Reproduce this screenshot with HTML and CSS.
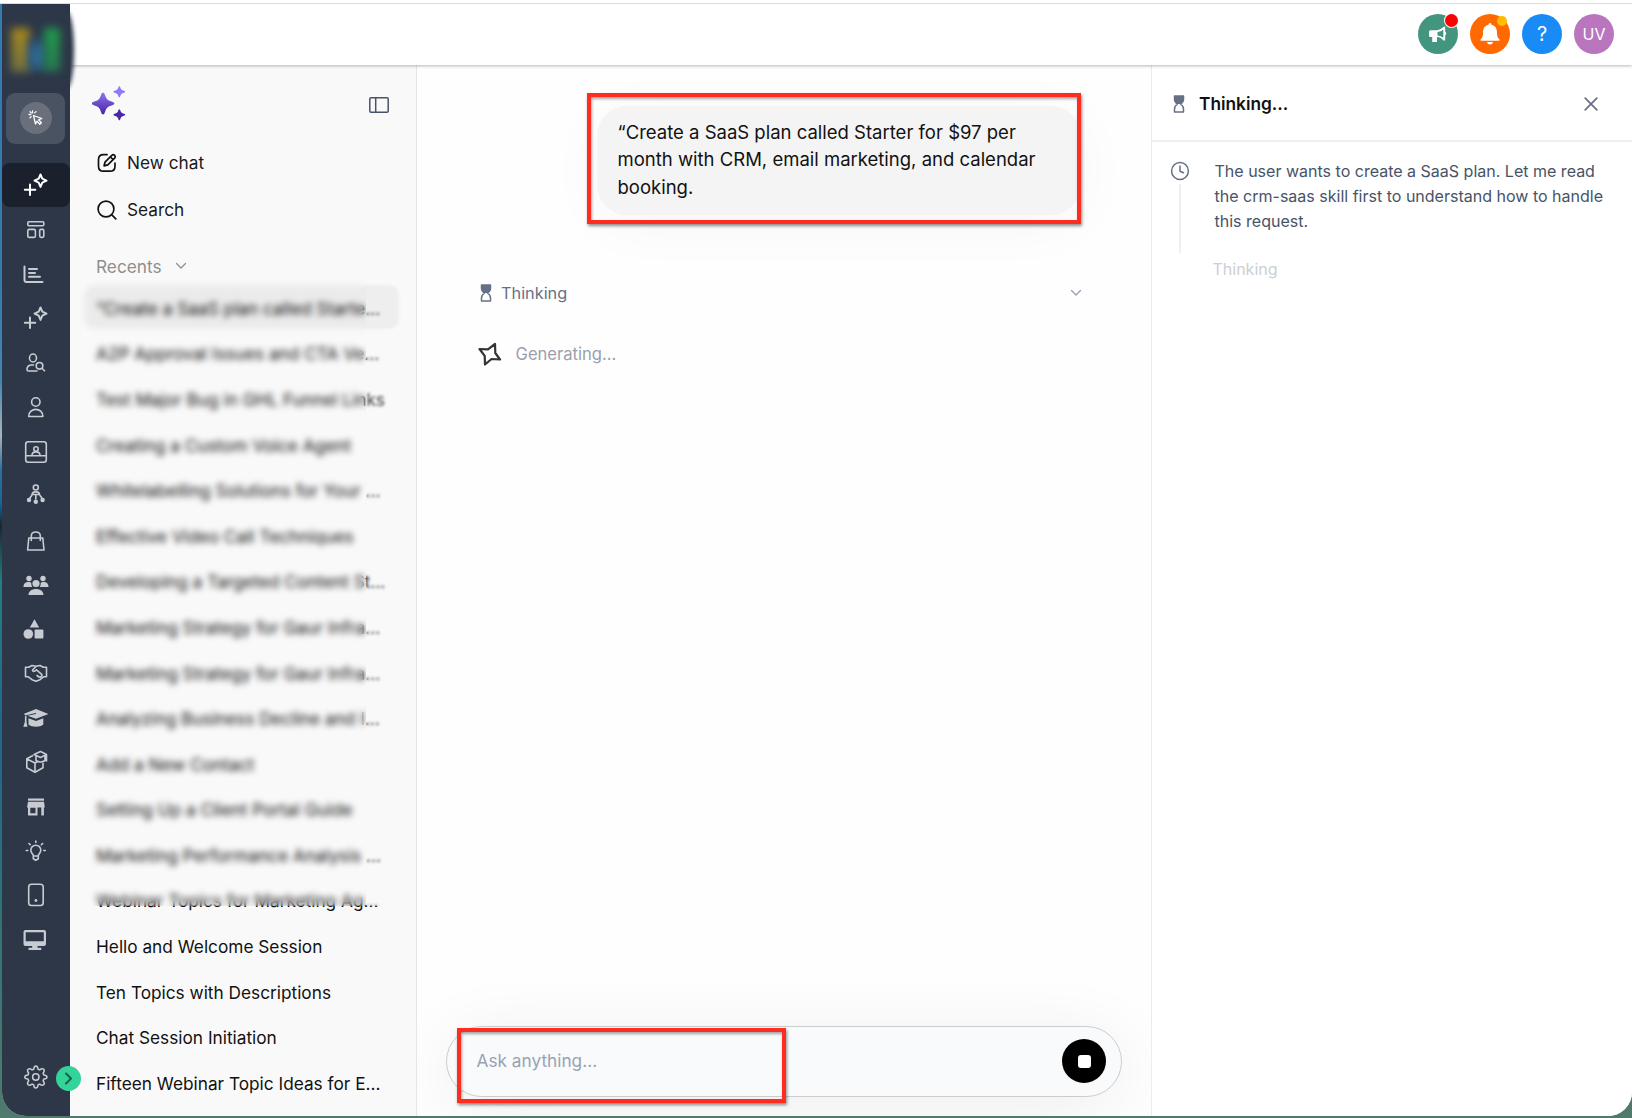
FILE: index.html
```html
<!DOCTYPE html>
<html lang="en">
<head>
<meta charset="utf-8">
<title>Ask AI</title>
<link rel="stylesheet" href="styles.css">
</head>
<body>
<div class="edge"></div>
<div class="window">
  <nav class="rail">
    <div class="logo"><i class="bar bar-y"></i><i class="bar bar-b"></i><i class="bar bar-g"></i></div>
    <div class="quick"><span class="quick-dot"><svg width="18" height="18" viewBox="0 0 18 18"><path d="M6.500 6.500l8.300 3-3.300 1.300 2.900 3-1.600 1.400-2.800-3-1.500 2.800z"/><path d="M5.500 2v1.800M2 5.500h1.800M3 2.600l1.300 1.300M9 2.600L7.700 3.900M3 8.800l1.200-1.200"/></svg></span></div>
    <div class="items">
      <a class="item active"><svg viewBox="0 0 26 26"><path class="w2" d="M17.500 2.500l1.800 4.200 4.200 2-4.200 2-1.800 4.200-1.800-4.200-4.200-2 4.200-2zM7 12.500v10.500M1.800 17.700h10.500"/></svg></a>
      <a class="item"><svg viewBox="0 0 26 26"><rect x="4.800" y="4.800" width="16" height="4" rx="1"/><rect x="4.800" y="12.400" width="7.600" height="8" rx="1.500"/><rect x="16.700" y="12.400" width="4.100" height="8" rx="1.300"/></svg></a>
      <a class="item"><svg viewBox="0 0 26 26"><path class="w2" d="M1.500 5.500v13.500q0 2 2 2h16M6 8h8M6 12h6M6 15.800h11"/></svg></a>
      <a class="item"><svg viewBox="0 0 26 26"><path class="w2" d="M17.500 2.500l1.800 4.200 4.200 2-4.200 2-1.800 4.200-1.800-4.200-4.200-2 4.200-2zM7 12.500v10.500M1.800 17.700h10.500"/></svg></a>
      <a class="item"><svg viewBox="0 0 26 26"><ellipse cx="10" cy="8" rx="3.500" ry="4"/><path d="M10.500 15H8q-4 .5-4 4.500 0 1.500 1.500 1.500H14"/><circle cx="16.500" cy="15.800" r="3.300"/><path d="M19 18.300l2.500 2.500"/></svg></a>
      <a class="item"><svg viewBox="0 0 26 26"><circle cx="12.800" cy="8" r="4.200"/><path d="M5.700 22.500c0-9.500 14.200-9.500 14.200 0z"/></svg></a>
      <a class="item"><svg viewBox="0 0 26 26"><rect x="2.700" y="2.700" width="20.600" height="20.600" rx="2.500"/><path d="M3 16.800h20"/><circle cx="13" cy="10" r="2.200"/><path d="M9 16.500c0-4.800 8-4.800 8 0"/></svg></a>
      <a class="item up"><svg viewBox="0 0 26 26"><circle cx="12.800" cy="6.500" r="2.500"/><path d="M9 13.500c.3-3.500 7.300-3.500 7.600 0zM8.700 14.500l-2.500 3.500M12.800 14v4M17 14.500l2.500 3.500"/><circle class="f" cx="6" cy="19" r="2.200"/><circle class="f" cx="12.800" cy="20.800" r="2.200"/><circle class="f" cx="19.600" cy="19" r="2.200"/></svg></a>
      <a class="item down"><svg viewBox="0 0 26 26"><path d="M5.800 10h14l1.200 12H4.600zM8.300 12.500V8c0-5.300 9-5.300 9 0v4.500"/></svg></a>
      <a class="item"><svg viewBox="0 0 26 26"><g class="f"><circle cx="6" cy="6.500" r="2.700"/><circle cx="20" cy="6.500" r="2.700"/><circle cx="13" cy="11.500" r="3.600"/><path d="M.5 15c0-6 6-5.500 7.800-4.300q-.3 2.600 1 4.300zM25.500 15c0-6-6-5.500-7.800-4.300q.3 2.600-1 4.300zM5.500 23c0-8 15-8 15 0z"/></g></svg></a>
      <a class="item"><svg viewBox="0 0 26 26"><g class="f"><path d="M11.500 3.200l4.700 8.300H6.800z"/><circle cx="5.300" cy="18" r="4.800"/><rect x="11.600" y="13.500" width="8.800" height="9" rx="1"/></g></svg></a>
      <a class="item"><svg viewBox="0 0 26 26"><path d="M2.500 7.200h3.200L9 5.500l4 .8 4-.8 3.300 1.700h3.200v9.500H21l-4 3-4 1.500-4-1.500-4-3H2.500zM13 6.500L9.500 10q.5 3 4-.2l5.200 4.500q1 1.500-1.700 3M14 15.500l2 1.500"/></svg></a>
      <a class="item"><svg viewBox="0 0 26 26"><g class="f"><path d="M13 4l12.500 5L13 13.800 4.500 10.700 13 8.900v-.8L3 10.200 .5 9z"/><path d="M5.500 13.200l7.500 2.700 7.300-2.700v6.300c-3 3-11.500 3-14.800 0z"/><path d="M2 10.500l1.500.5v6l1 4.800H.3l1.500-4.600z"/></g></svg></a>
      <a class="item"><svg viewBox="0 0 26 26"><path d="M9.500 6.700L3.800 9.800v9l8.200 4.500 8-4.500v-4.500M4 10l8 4v9M12 14l2-1"/><path d="M11 5.500l6.500-3 6 3-6 3zM13 7v4.500q4.500 3 9 0V7M23.500 6v6"/></svg></a>
      <a class="item"><svg viewBox="0 0 26 26"><g class="f"><rect x="5" y="4.500" width="16" height="2.200"/><path d="M5 7.800h16l.8 5.800H20.900V21.500H18.300v-7.900h-3.800v7.900H5v-7.900H4zM7.300 13.800v5.400h5.200v-5.400z" fill-rule="evenodd"/></g></svg></a>
      <a class="item"><svg viewBox="0 0 26 26"><path d="M10.300 17.500c-.5-2-2.500-2.700-2.500-5.300a5 5 0 0 1 10 0c0 2.600-2 3.300-2.500 5.300v3.300l-2.500 1.500-2.500-1.500zM10.500 18h4.500M12.800 3v1.500M6 5.500l1.200 1.200M19.600 5.500l-1.200 1.200M3.300 12.500h1.500M20.800 12.500h1.500"/></svg></a>
      <a class="item"><svg viewBox="0 0 26 26"><rect x="5.700" y="2.200" width="14.500" height="21.300" rx="2.800"/><circle class="f" cx="12.900" cy="18.500" r="1.400"/></svg></a>
      <a class="item"><svg viewBox="0 0 26 26"><path class="f" d="M2.500 3h18.500q2 0 2 2v12q0 2-2 2h-6.500v1.700h3.800v2.300H5.500v-2.300h3.700V19H2.500q-2 0-2-2V5q0-2 2-2zM2.700 5.200v9h18.100v-9z" fill-rule="evenodd"/></svg></a>
    </div>
    <a class="gear"><svg width="26" height="26" viewBox="0 0 26 26"><circle cx="12.800" cy="13" r="3.200"/><path d="M12.800 2q2 0 2.300 3.200l1.600.7q2.600-2 4 -.6t-.6 4l.7 1.600Q24 11.200 24 13t-3.200 2.100l-.7 1.600q2 2.600.6 4t-4-.6l-1.600.7Q14.800 24 12.800 24t-2.100-3.200l-1.600-.7q-2.600 2-4 .6t.6-4l-.7-1.600Q1.800 15 1.800 13T5 10.900l.7-1.600q-2-2.600-.6-4t4 .6l1.600-.7Q11 2 12.800 2z"/></svg></a>
    <span class="expand"><svg width="24" height="24" viewBox="0 0 24 24"><path d="M10 7.500l5 5-5 5"/></svg></span>
  </nav>
  <div class="content">
    <header class="topbar">
      <span class="round green"><svg width="22" height="22" viewBox="0 0 22 22"><path fill="#fff" fill-rule="evenodd" d="M3.500 7.300h5.500c3 0 5.500-1.500 7.500-3.500h1.700v4.700q2 2 0 4v4.900h-1.700c-1.500-2-3.500-3.300-6.500-3.500v5.200H5.200v-5.200H3.500q-1.500 0-1.500-1.500V8.800q0-1.500 1.500-1.500zM10.500 9v3.500q3.500.3 5.800 2.200V6.800Q14 8.700 10.500 9z"/></svg><b class="badge red"></b></span>
      <span class="round orange"><svg width="22" height="24" viewBox="0 0 22 24"><path fill="#fff" d="M11 1q1.500 0 1.500 1.800c4.500 1 5.500 4.500 5.500 8 0 4 1 5.200 2.500 6.700v1.300H1.500v-1.300C3 16 4 14.800 4 10.800c0-3.500 1-7 5.500-8Q9.500 1 11 1zM8 20h6q-.5 2.500-3 2.500T8 20z"/></svg><b class="badge amber"></b></span>
      <span class="round blue">?</span>
      <span class="round violet">UV</span>
    </header>
    <div class="columns">
      <aside class="chats">
        <div class="brand">
          <svg width="34" height="36" viewBox="0 0 34 36"><defs><linearGradient id="g" x1="0" y1="0" x2="0" y2="1"><stop offset="0" stop-color="#8b78ee"/><stop offset="1" stop-color="#4a22a4"/></linearGradient></defs><path fill="url(#g)" d="M11 6.500q1.400 0 2.200 3 1.200 4.800 6.400 6 2.800.8 2.800 2t-2.800 2q-5.200 1.200-6.400 6-.8 3-2.200 3t-2.200-3q-1.200-4.800-6.400-6Q-.4 18.700-.4 17.500t2.800-2q5.200-1.200 6.400-6 .8-3 2.200-3z"/><path fill="#8e7cf2" d="M27.300.200q.8 0 1.400 2.300.6 1.500 2.500 2 2 .5 2 1.300t-2 1.300q-1.900.5-2.500 2-.6 2.300-1.400 2.300t-1.400-2.300q-.6-1.500-2.500-2-2-.5-2-1.300t2-1.300q1.900-.5 2.500-2 .6-2.300 1.400-2.300z"/><path fill="#4b26a8" d="M27.300 23.200q.8 0 1.400 2.300.6 1.500 2.500 2 2 .5 2 1.300t-2 1.300q-1.900.5-2.500 2-.6 2.300-1.400 2.300t-1.400-2.300q-.6-1.500-2.500-2-2-.5-2-1.300t2-1.300q1.900-.5 2.500-2 .6-2.300 1.400-2.300z"/></svg>
          <svg class="toggle" width="20" height="16" viewBox="0 0 20 16"><rect x=".8" y=".8" width="18.400" height="14.400" rx="1.200"/><path d="M6.700 1v14"/></svg>
        </div>
        <a class="action"><svg width="20" height="20" viewBox="0 0 20 20"><path d="M10 1.700H6.500q-5 0-5 5v6.500q0 5 5 5h6.500q5 0 5-5V10"/><path d="M8 9.200l6.800-6.900q1.500-1.200 2.800 0t0 2.800l-6.800 6.800-3.700.9zM13.500 4l2.500 2.500"/></svg>New chat</a>
        <a class="action"><svg width="20" height="20" viewBox="0 0 20 20"><circle cx="9" cy="9" r="7.900"/><path d="M14.800 14.800l4 4"/></svg>Search</a>
        <div class="recents">Recents <svg width="12" height="8" viewBox="0 0 12 8"><path d="M1.500 1.500L6 6l4.500-4.500"/></svg></div>
        <ul class="list">
          <li class="on">“Create a SaaS plan called Starte...</li>
          <li>A2P Approval Issues and CTA Ve...</li>
          <li>Test Major Bug in GHL Funnel Links</li>
          <li>Creating a Custom Voice Agent</li>
          <li>Whitelabelling Solutions for Your ...</li>
          <li>Effective Video Call Techniques</li>
          <li>Developing a Targeted Content St...</li>
          <li>Marketing Strategy for Gaur Infra...</li>
          <li>Marketing Strategy for Gaur Infra...</li>
          <li>Analyzing Business Decline and I...</li>
          <li>Add a New Contact</li>
          <li>Setting Up a Client Portal Guide</li>
          <li>Marketing Performance Analysis ...</li>
          <li>Webinar Topics for Marketing Ag...</li>
          <li>Hello and Welcome Session</li>
          <li>Ten Topics with Descriptions</li>
          <li>Chat Session Initiation</li>
          <li>Fifteen Webinar Topic Ideas for E...</li>
        </ul>
        <div class="veil"></div>
        <div class="veil veil-end"></div>
      </aside>
      <main class="chat">
        <div class="bubble">“Create a SaaS plan called Starter for $97 per<br>month with CRM, email marketing, and calendar<br>booking.<span class="mark mark-bubble"></span></div>
        <div class="status"><svg class="glass" width="12" height="18" viewBox="0 0 12 18"><path class="gf" d="M1 1h10v3q0 3-3.500 5h-3Q1 7 1 4z"/><path d="M1.500 1h9v3q0 3-3 5 3 2 3 5v3h-9v-3q0-3 3-5-3-2-3-5z"/></svg><span>Thinking</span><svg class="chev" width="12" height="8" viewBox="0 0 12 8"><path d="M1.500 1.500L6 6l4.500-4.500"/></svg></div>
        <div class="generating"><svg width="24" height="24" viewBox="0 0 24 24"><path d="M17 2l.3 9 4.700 6.500-8.500-.5L7 22.500l-.3-8.700L1.500 7l8.500.3z"/></svg>Generating...</div>
        <div class="composer"><span>Ask anything...</span><button class="stop"><i></i></button><span class="mark mark-input"></span></div>
      </main>
      <section class="thoughts">
        <div class="head"><svg class="glass" width="12" height="18" viewBox="0 0 12 18"><path class="gf" d="M1 1h10v3q0 3-3.500 5h-3Q1 7 1 4z"/><path d="M1.500 1h9v3q0 3-3 5 3 2 3 5v3h-9v-3q0-3 3-5-3-2-3-5z"/></svg><h2>Thinking...</h2><svg class="close" width="14" height="14" viewBox="0 0 14 14"><path d="M1.200 1.200l11.600 11.600M12.800 1.200L1.200 12.800"/></svg></div>
        <div class="step">
          <div class="track"><svg width="20" height="20" viewBox="0 0 20 20"><circle cx="10" cy="10" r="8.400"/><path d="M10 5v5.200l3.500 1.600"/></svg><i></i></div>
          <p>The user wants to create a SaaS plan. Let me read<br>the crm-saas skill first to understand how to handle<br>this request.</p>
        </div>
        <div class="pending">Thinking</div>
      </section>
    </div>
  </div>
</div>
</body>
</html>
```
FILE: styles.css
```css
* { box-sizing: border-box; }
body {
  margin: 0; width: 1632px; height: 1118px; overflow: hidden; position: relative;
  font-family: Inter, "Liberation Sans", sans-serif; font-size: 17.250px; color: #111;
  background: linear-gradient(#3579b0 0 25%, #4585b0 34%, #a9b4b5 39%, #2f70a0 42%, #17669a 45%, #18272e 47%, #237f80 52%, #23658c 66%, #2c7378 80%, #4f7a6c 100%);
}
svg { display: block; fill: none; stroke-linecap: round; stroke-linejoin: round; flex: none; }
.edge { height: 4px; background: #fff; border-bottom: 1px solid #dcdcdc; }
.window { display: flex; margin-left: 1.500px; height: 1111.500px; width: 1630.500px; border-radius: 0 0 24px 24px; overflow: hidden; background: #fefefe; }

.rail { width: 68.500px; flex: none; background: #2d3748; position: relative; display: flex; flex-direction: column; align-items: center; z-index: 3; }
.logo { height: 88.500px; width: 68px; position: relative; }
.logo::before { content: ""; position: absolute; left: 58px; top: 8px; width: 14px; height: 76px; border-radius: 50%; background: #2d3748; filter: blur(2px); }
.bar { position: absolute; filter: blur(4px); }
.bar-y { left: 9px; top: 24px; width: 19px; height: 44px; background: linear-gradient(#a5861e, #6f7040); }
.bar-b { left: 27px; top: 35px; width: 17px; height: 31px; background: linear-gradient(#2d4d70, #2d6d9a 50%, #2d5d80); }
.bar-g { left: 42px; top: 24px; width: 16px; height: 43px; background: linear-gradient(#1f9a4c, #277a50); }
.quick { width: 59px; height: 51px; border-radius: 9px; background: #4a5362; display: grid; place-items: center; }
.quick-dot { width: 32px; height: 32px; border-radius: 50%; background: #69707c; display: grid; place-items: center; }
.quick svg { stroke: #fff; stroke-width: 1.300; }
.items { margin-top: 19.500px; width: 68.500px; display: flex; flex-direction: column; }
.item { height: 44.400px; display: grid; place-items: center; }
.item svg { width: 26px; height: 26px; stroke: #c8cbd2; stroke-width: 1.600; }
.item .w2 { stroke-width: 2; }
.item .f { fill: #c8cbd2; stroke: none; }
.item.up { padding-bottom: 3px; }
.item.down { padding-top: 2px; }
.active { background: #1a202c; border-radius: 8px; }
.active svg { stroke: #fff; }
.gear { margin-top: 101.500px; }
.gear svg { stroke: #c8cbd2; stroke-width: 1.500; }
.expand { position: absolute; left: 54px; top: 1062px; width: 25px; height: 25px; border-radius: 50%; background: #34d399; }
.expand svg { stroke: #14614a; stroke-width: 2; }

.content { flex: 1; min-width: 0; display: flex; flex-direction: column; }
.topbar { height: 61px; flex: none; background: #fff; box-shadow: 0 1px 3px rgba(0,0,0,.28); position: relative; z-index: 2; display: flex; justify-content: flex-end; align-items: center; gap: 12px; padding: 0 18px 1px 0; }
.round { width: 40px; height: 40px; border-radius: 50%; display: grid; place-items: center; color: #fff; font-size: 16px; position: relative; }
.green { background: #439580; } .orange { background: #ff6900; } .blue { background: #188bf6; font-size: 20px; } .violet { background: #ba75bf; }
.badge { position: absolute; border-radius: 50%; }
.red { width: 13px; height: 13px; left: 27px; top: 0; background: #f00; box-shadow: 0 0 0 1px #fff; }
.amber { width: 10px; height: 10px; left: 27px; top: 2px; background: #ffbc00; }
.columns { flex: 1; display: flex; min-height: 0; }

.chats { width: 347px; flex: none; background: #f9f9f9; border-right: 1px solid #e6e6e6; position: relative; padding: 21px 16px 0 14px; }
.brand { display: flex; justify-content: space-between; padding: 0 11px 0 8px; height: 53.500px; }
.toggle { margin-top: 11px; stroke: #475467; stroke-width: 1.500; }
.action { display: flex; align-items: center; gap: 10px; height: 46.800px; padding-left: 13px; color: #1a1a1a; }
.action svg { stroke: #111; stroke-width: 1.700; }
.recents { display: flex; align-items: center; gap: 13px; height: 52px; padding: 14px 0 0 12px; color: #8f8f8f; }
.recents svg { stroke: #8f8f8f; stroke-width: 1.300; }
.list { list-style: none; margin: 0; padding: 0; }
.list li { height: 43.580px; margin-bottom: 2px; display: flex; align-items: center; padding: 3px 0 0 12px; border-radius: 10px; white-space: nowrap; width: 315px; }
.list .on { background: #ebebeb; }
.veil { position: absolute; left: 10px; top: 212px; width: 286px; height: 629px; backdrop-filter: blur(3px); }
.veil-end { left: 296px; width: 36px; backdrop-filter: blur(1.500px); background: rgba(249,249,249,.2); }

.chat { width: 734px; flex: none; position: relative; overflow: hidden; display: flex; flex-direction: column; background: #fefefe; }
.bubble { margin: 40.500px 0 0 180px; width: 484px; height: 109px; border-radius: 30px; background: #f4f4f4; padding: 13px 20.500px; font-size: 18.500px; line-height: 27.800px; white-space: nowrap; box-shadow: 0 10px 60px rgba(0,0,0,.035); position: relative; }
.mark { position: absolute; border: 4px solid #ff2d1f; box-shadow: 1px 2px 3px rgba(0,0,0,.45), inset 1px 2px 3px rgba(0,0,0,.35); }
.mark-bubble { left: -10px; top: -13px; width: 494px; height: 131px; }
.status { display: flex; align-items: center; margin: 66.500px 69px 0 63px; height: 24px; gap: 9px; color: #667085; font-size: 16.300px; }
.glass { stroke: #667085; stroke-width: 1.500; }
.gf { fill: #667085; stroke: none; }
.chev { margin-left: auto; stroke: #98a2b3; stroke-width: 1.400; }
.generating { display: flex; align-items: center; gap: 13.500px; margin: 37px 0 0 61px; height: 24px; color: #9aa0ac; font-size: 16.600px; }
.generating svg { stroke: #333; stroke-width: 2.200; }
.composer { margin: auto 0 18.500px 29px; width: 676px; height: 71px; border: 1px solid #ccc; border-radius: 36px; background: #f9fafc; display: flex; align-items: center; justify-content: space-between; padding: 0 15px 3px 29.500px; color: #98a2b3; position: relative; box-shadow: 0 10px 70px rgba(0,0,0,.07); }
.stop { width: 44px; height: 44px; border-radius: 50%; background: #000; border: 0; padding: 0; display: grid; place-items: center; margin-top: 2px; }
.stop i { width: 13px; height: 13px; border-radius: 3px; background: #fff; }
.mark-input { left: 10px; top: 1px; width: 329px; height: 75px; }

.thoughts { flex: 1; border-left: 1px solid #ececec; background: #fff; }
.head { height: 77px; border-bottom: 2px solid #f0f0f0; display: flex; align-items: center; padding: 2px 34px 0 21px; }
.head h2 { margin: 0 auto 0 14px; font-size: 17.300px; font-weight: 600; color: #111; }
.close { stroke: #667085; stroke-width: 1.700; }
.step { display: flex; gap: 24.500px; padding: 18px 0 0 18px; }
.track { width: 20px; display: flex; flex-direction: column; align-items: center; gap: 3px; padding-top: 1px; }
.track svg { stroke: #667085; stroke-width: 1.500; }
.track i { width: 2px; height: 69px; background: #f0f0f0; }
.step p { margin: -1px 0 0; font-size: 16.030px; line-height: 25px; color: #475467; white-space: nowrap; }
.pending { margin: 4px 0 0 60.500px; font-size: 16px; line-height: 24px; color: #cccfd4; }
```
